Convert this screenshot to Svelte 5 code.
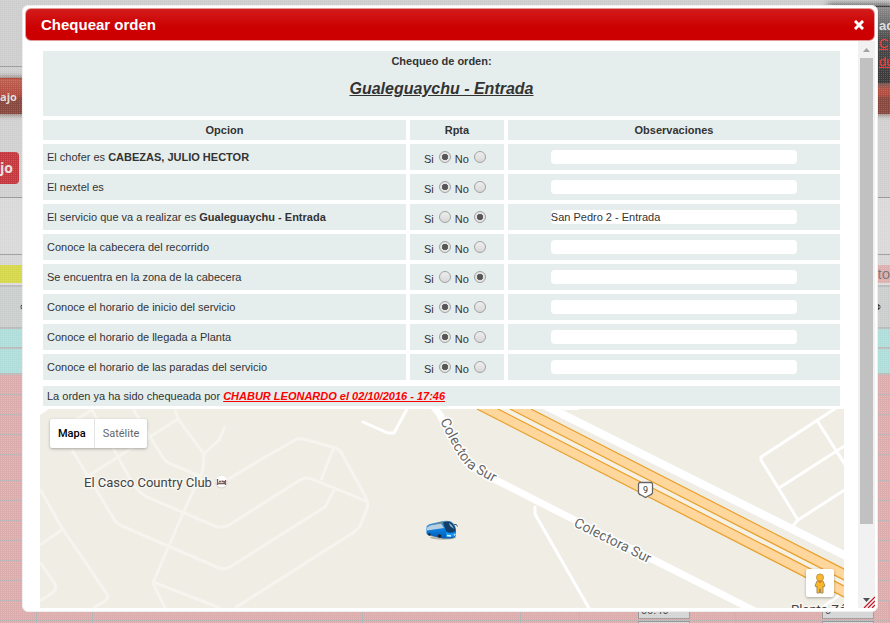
<script>
  let questions = $state([
    { text: 'El chofer es ', strong: 'CABEZAS, JULIO HECTOR', answer: 'si', note: '' },
    { text: 'El nextel es', strong: '', answer: 'si', note: '' },
    { text: 'El servicio que va a realizar es ', strong: 'Gualeguaychu - Entrada', answer: 'no', note: 'San Pedro 2 - Entrada' },
    { text: 'Conoce la cabecera del recorrido', strong: '', answer: 'si', note: '' },
    { text: 'Se encuentra en la zona de la cabecera', strong: '', answer: 'no', note: '' },
    { text: 'Conoce el horario de inicio del servicio', strong: '', answer: 'si', note: '' },
    { text: 'Conoce el horario de llegada a Planta', strong: '', answer: 'si', note: '' },
    { text: 'Conoce el horario de las paradas del servicio', strong: '', answer: 'si', note: '' }
  ]);

  // Heights of the striped order rows behind the dialog
  const orderRows = [19, 19, 19, 19, 25, 19, 19, 19, 19, 19, 19];

  const trails = [
    'M40 489L62 528L107 594Q109 598 105 601L93 608',
    'M40 545L63 529',
    'M40 562L55 584Q57 590 52 593L40 601',
    'M72 450L114 519Q117 524 122 526L219 568Q225 570 230 567L325 507L334 490',
    'M72 422L92 410L128 475Q133 489 147 497L215 526Q222 529 229 525L300 480Q306 476 314 480L366 501',
    'M88 476L178 419',
    'M133 409L162 456Q165 462 171 464L202 477',
    'M175 409L178 419L204 454L219 440L225 426',
    'M204 454L203 470L183 513L153 583L165 608',
    'M153 582L220 608',
    'M227 480L260 460L297 439Q301 438 307 440L336 448Q340 450 342 454L364 494Q370 505 366 511L360 526Q358 529 354 532L235 608',
    'M334 447L321 480'
  ];
  const lanes = [
    'M363 422L388 433H394L407 409',
    'M535 507V514L590 610',
    'M836 408L761 457V460L798 520L790 529',
    'M818 422L846 466',
    'M779 488L846 445',
    'M798 520L846 489',
    'M820 609L838 596'
  ];
</script>

<div class="page">
  <div class="backdrop">
    <div class="band top"></div>
    <div class="band nav"><span>ajo</span></div>
    <div class="band tools"><button type="button" class="work">jo</button></div>
    <div class="band filters"></div>
    <div class="band gap"></div>
    <div class="band groups"><span class="yellow"></span><span class="pink">to</span></div>
    <div class="band heads">
      {#each ['left', 'right'] as side (side)}
        <svg width="5" height="6" viewBox="0 0 5 6"><path d="M0 2.500L2.500 0L5 2.500ZM0 3.500H5L2.500 6Z" fill="#333" /></svg>
      {/each}
    </div>
    <div class="band cyan low"></div>
    <div class="band cyan"></div>
    {#each orderRows as height}
      <div class="band order" style:height="{height}px"></div>
    {/each}
    <div class="band order cells">
      <i class="a"></i><i class="b"></i><i class="c"></i><i class="d"></i><i class="e"></i>
      <i class="f"><input aria-label="Hora" value="06:40" /></i>
      <i class="g"><input aria-label="Cantidad" value="0" /></i>
    </div>
    <div class="band order cells last">
      <i class="a"></i><i class="b"></i><i class="c"></i><i class="d"></i><i class="e"></i>
      <i class="f"><input aria-label="Hora siguiente" /></i>
      <i class="g"><input aria-label="Cantidad siguiente" /></i>
    </div>
    <div class="account">
      <b>ad</b>
      <a href="#cuenta">C</a>
      <a href="#datos">du</a>
    </div>
    <div class="mesh"></div>
  </div>

  <div class="dialog" role="dialog" aria-labelledby="dialog-title">
    <header>
      <h1 id="dialog-title">Chequear orden</h1>
      <button type="button" aria-label="Cerrar">
        <svg width="10" height="10" viewBox="0 0 10 10"><path d="M2 2L8 8M8 2L2 8" stroke="#fff" stroke-width="3" stroke-linecap="square" /></svg>
      </button>
    </header>

    <div class="body">
      <div class="content">
        <table>
          <colgroup><col class="option" /><col class="reply" /><col /></colgroup>
          <thead>
            <tr class="intro">
              <th colspan="3">
                <div>Chequeo de orden:</div>
                <h2>Gualeguaychu - Entrada</h2>
              </th>
            </tr>
            <tr class="names"><th>Opcion</th><th>Rpta</th><th>Observaciones</th></tr>
          </thead>
          <tbody>
            {#each questions as q, i}
              <tr>
                <td>{q.text}{#if q.strong}<b>{q.strong}</b>{/if}</td>
                <td class="choice">
                  <div>
                    <label>Si <input type="radio" name="r{i}" value="si" bind:group={q.answer} /></label>
                    <label>No <input type="radio" name="r{i}" value="no" bind:group={q.answer} /></label>
                  </div>
                </td>
                <td class="note"><input type="text" aria-label="Observaciones: {q.text}" bind:value={q.note} /></td>
              </tr>
            {/each}
          </tbody>
        </table>

        <p class="checked">La orden ya ha sido chequeada por <strong>CHABUR LEONARDO el 02/10/2016 - 17:46</strong></p>

        <div class="map">
          <svg class="tiles" viewBox="40 409 804 199" preserveAspectRatio="xMinYMin slice">
            <defs>
              <path id="road-a" d="M440 421C450 441 461 463 470 469S486 478 505 489" />
              <path id="road-b" d="M573 526L660 569" />
              <linearGradient id="bus-side" x1="0" y1="0" x2="0" y2="1">
                <stop offset="0" stop-color="#3d9be0" /><stop offset=".5" stop-color="#0a7fe0" /><stop offset="1" stop-color="#0558ae" />
              </linearGradient>
            </defs>
            <rect x="40" y="409" width="804" height="199" fill="#efede4" />
            <g fill="none" stroke="#f6f4ef" stroke-width="3">
              {#each trails as d}<path {d} />{/each}
            </g>
            <path d="M40 409H49L40 415Z" fill="#fff" />
            <g fill="none" stroke="#fff" stroke-width="3" stroke-linecap="round">
              {#each lanes as d}<path {d} />{/each}
              <path d="M544 405L846 556" stroke-width="8" />
              <path d="M564 409L578 409" stroke-width="2" />
              <path d="M431 403L440 415C450 434 461 458 470 465S486 475 500 482L600 533L650 558L755 611" stroke-width="7" />
            </g>
            <path d="M510 409L498 409L844 586V580Z" fill="#f5f1e5" />
            <g fill="#ffd69b">
              <path d="M531 409L846 570V581L510 409Z" />
              <path d="M498 409L846 587V598L477 409Z" />
            </g>
            <path d="M531 409L846 570M510 409L846 581M498 409L846 587M477 409L846 598" stroke="#e8a02c" stroke-width="1.2" fill="none" />

            <path d="M639.5 482.500H651.500L652.500 484V493Q652 494.500 649 495.500L645.500 497.500L642 495.500Q639 494.500 638.500 493V484Z" fill="#fff" stroke="#666" stroke-width="1.3" />
            <text x="645.500" y="493" class="shield">9</text>

            <g class="road-name">
              <text><textPath href="#road-a">Colectora Sur</textPath></text>
              <text><textPath href="#road-b">Colectora Sur</textPath></text>
            </g>
            <text x="84" y="487" class="place">El Casco Country Club</text>
            <text x="791" y="614" class="place">Planta Zárate</text>

            <circle cx="221.500" cy="482" r="6.500" fill="#d8d5cf" />
            <circle cx="221.500" cy="481.500" r="6" fill="#fff" />
            <path d="M217.500 479V485M217.500 483.500H225.500M225.500 480V485M219 481.500H221M221.500 481L225 482" stroke="#7a5f5a" stroke-width="1.400" fill="none" />

            <g class="bus">
              <ellipse cx="443" cy="537.500" rx="13" ry="2.200" fill="#918d82" opacity=".6" />
              <path d="M426.500 527Q427 525 430 524L442 521.200Q450 520 453 523Q456 526 456 531V535.500Q455 538 450 538.500L443 538.500L428 535Q426.500 534.500 426.500 533Z" fill="url(#bus-side)" />
              <path d="M427 527.500L430 525.500L441 523.500L444 528L427 530.500Z" fill="#b9cfdf" />
              <path d="M429 525L443 521.500L449 521L443 523.500Z" fill="#6d8793" />
              <path d="M443 522.500Q449 520.500 452 523Q455 526 455.500 531Q450 534 446 531Z" fill="#133e68" />
              <path d="M449 523Q452 524 454 529L450 526Z" fill="#8fb3cc" />
              <path d="M446 532Q450 534.500 456 532V535Q453 538 446 537Z" fill="#1497f5" />
              <path d="M447 535.500L451 536M454 535L455.500 534.500" stroke="#d7f6ff" stroke-width="1.500" />
              <circle cx="439.500" cy="536" r="1.800" fill="#1b2733" /><circle cx="429.500" cy="534.500" r="1.300" fill="#1b2733" />
              <path d="M454 524.500Q457 523.500 457.500 526.500" stroke="#4a5560" fill="none" />
            </g>
          </svg>
          <div class="types">
            <button type="button" class="on">Mapa</button><button type="button">Satélite</button>
          </div>
          <button type="button" class="pegman" aria-label="Street View">
            <svg width="14" height="21" viewBox="0 0 14 21">
              <path d="M4 8Q7 6.500 10 8L12 13L10.500 14L10 13V20H7.500V16H6.500V20H4V13L3.500 14L2 13Z" fill="#fbb829" stroke="#a78b62" stroke-width="1" />
              <circle cx="7" cy="4.500" r="3.500" fill="#fbb829" stroke="#c09443" />
              <path d="M5 8H9L7 10.500Z" fill="#e8711a" />
            </svg>
          </button>
        </div>
      </div>

      <div class="scroll" aria-hidden="true">
        <svg width="17" height="17" viewBox="0 0 17 17"><path d="M5 11L8.500 7L12 11Z" fill="#a3a3a3" /></svg>
        <div class="thumb"></div>
        <svg class="end" width="17" height="17" viewBox="0 0 17 17">
          <path d="M5 7L8.500 11L12 7Z" fill="#505050" />
          <path d="M6 17L17 6M10 17L17 10M14 17L17 14" stroke="#cc1122" stroke-width="1.200" />
        </svg>
      </div>
    </div>
  </div>
</div>

<style>
  .page {
    display: grid;
    min-height: 100vh;
    overflow: hidden;
    color: #333;
    font: 11px/13px "Liberation Sans", Arial, sans-serif;
  }
  button, input { font: inherit; }
  .backdrop, .dialog { grid-area: 1 / 1; }
  .backdrop { position: relative; overflow: hidden; background: #dcdcdc; }
  .band { box-sizing: border-box; display: flex; justify-content: space-between; }
  .top { height: 78px; background: linear-gradient(#999, #999) 0 66px / 100% 1px no-repeat, #cecece; }
  .nav {
    position: relative;
    height: 36px;
    align-items: center;
    background: linear-gradient(#bd6153, #b04c40 45%, #86483f 55%, #86483f);
    box-shadow: 0 0 4px 2px #9a8a86;
    border-top: 1px solid #a6402f;
    color: #e4dada;
    font: bold 11px/16px "Open Sans", sans-serif;
  }
  .tools { height: 84px; padding-top: 38px; align-items: flex-start; border-bottom: 1px solid #999; background: #d0d0d0; }
  .work {
    width: 19px;
    height: 32px;
    padding: 0;
    border: 0;
    border-radius: 0 4px 4px 0;
    background: #c23a40;
    color: #e8e0e0;
    text-align: left;
    font: bold 14px/20px "Open Sans", sans-serif;
  }
  .filters { height: 57px; border-bottom: 1px solid #999; background: #d9d9d9; }
  .gap { height: 10px; background: #d6d6d6; }
  .groups { height: 22px; border-bottom: 2px solid #bbb; }
  .groups span { width: 50%; height: 18px; }
  .yellow { background: #d5d84f; }
  .pink { background: #deafaf; text-align: right; color: #777; font-size: 15px; line-height: 18px; }
  .heads { height: 42px; align-items: center; padding: 0 9px 0 20px; border-bottom: 2px solid #bbb; background: #cacfce; }
  .cyan { height: 26px; border-bottom: 2px solid #bbb; background: #b0dcda; }
  .cyan.low { height: 20px; }
  .order { box-sizing: content-box; border-bottom: 1px solid #aeb6ba; background: #dbadad; }
  .cells { height: 19px; justify-content: flex-start; }
  .cells.last { height: 2px; border: 0; }
  .cells i { box-sizing: border-box; flex: none; border-right: 1px solid #aeb6ba; font-style: normal; }
  .cells .a { width: 37px; }
  .cells .b { width: 56px; }
  .cells .c { width: 270px; }
  .cells .d { width: 158px; }
  .cells .e { width: 59px; }
  .cells .f { width: 156px; padding-left: 58px; }
  .cells .g { flex: 1; padding-left: 86px; }
  .cells input {
    display: block;
    box-sizing: border-box;
    width: 52px;
    height: 18px;
    padding: 0 2px;
    border: 1px solid #999;
    background: #d5d5d5;
    color: #444;
  }
  .account {
    position: absolute;
    top: 6px;
    right: 0;
    display: flex;
    flex-direction: column;
    align-items: flex-start;
    gap: 4px;
    box-sizing: border-box;
    width: 60px;
    height: 77px;
    padding: 12px 0 0 49px;
    border-top: 1px solid #333;
    background: linear-gradient(#8c8c8c, #484848 45%, #3a3a3a);
    box-shadow: 0 0 6px 2px #555;
    color: #ddd;
    font-size: 13px;
    line-height: 14px;
  }
  .account a { color: #e8403e; }
  .mesh { position: absolute; inset: 0; background: conic-gradient(rgba(255, 255, 255, .16) 25%, transparent 0) 0 0 / 2px 2px; }

  .dialog {
    position: relative;
    align-self: start;
    margin: 5px 12px 0 22px;
    padding: 2px 2px 3px;
    border: 1px solid #eee;
    border-radius: 6px;
    background: #fff;
  }
  header {
    display: flex;
    align-items: center;
    justify-content: space-between;
    box-sizing: border-box;
    height: 33px;
    padding: 0 10px 0 15px;
    border: 1px solid #e39a9a;
    border-radius: 6px;
    background: linear-gradient(#d21c1c, #c00 60%);
    color: #fff;
  }
  h1 { margin: 0; font-size: 15px; line-height: 20px; }
  header button { display: flex; padding: 0; border: 0; background: none; }
  .body { display: flex; }
  .content { flex: 1; min-width: 0; padding: 6px 14px 0; }
  table { width: 100%; table-layout: fixed; border-spacing: 4px; }
  .option { width: 46%; }
  .reply { width: 94px; }
  th, td { padding: 0 4px; background: #e6eeed; }
  td { height: 26px; }
  .names th { height: 20px; }
  .intro th { height: 61px; padding-top: 4px; vertical-align: top; }
  h2 { margin: 11px 0 0; font-size: 16px; line-height: 20px; font-style: italic; text-decoration: underline; }
  .choice { padding: 0; vertical-align: top; }
  .choice div { display: flex; justify-content: center; gap: 4px; height: 19px; padding: 7px 4px 0 0; }
  label { display: flex; align-items: baseline; gap: 5px; }
  [type="radio"] {
    appearance: none;
    box-sizing: border-box;
    width: 12px;
    height: 12px;
    margin: 0 0 2px;
    border: 1px solid #a2a2a2;
    border-radius: 50%;
    background: linear-gradient(#eee, #d8d8d8);
  }
  [type="radio"]:checked { background: radial-gradient(circle, #555 0 2px, #666 3px, #e4e4e4 3px); }
  .note { text-align: center; }
  .note input {
    display: block;
    box-sizing: border-box;
    width: 76%;
    height: 14px;
    margin: 0 auto;
    padding: 0;
    border: 0;
    border-radius: 4px;
    background: #fff;
    color: #333;
  }
  .checked { margin: 2px 4px 3px; padding: 4px 4px 3px; background: #e6eeed; }
  .checked strong { color: #f00; font-style: italic; text-decoration: underline; }

  .map { position: relative; height: 199px; margin-left: 1px; overflow: hidden; background: #efede4; font-family: Roboto, sans-serif; }
  .tiles { display: block; width: 100%; height: 100%; }
  .place { fill: #444; font-size: 13px; paint-order: stroke; stroke: #f7f6f1; stroke-width: 3px; }
  .road-name { fill: #666; font-size: 14px; paint-order: stroke; stroke: #fff; stroke-width: 3px; }
  .shield { fill: #333; font-size: 9px; text-anchor: middle; }
  .types {
    position: absolute;
    top: 10px;
    left: 10px;
    display: flex;
    border-radius: 2px;
    background: #fff;
    box-shadow: 0 1px 3px rgba(0, 0, 0, .3);
  }
  .types button { padding: 8px; border: 0; background: none; color: #666; line-height: 13px; }
  .types .on { border-right: 1px solid #e4e4e4; color: #000; font-weight: 500; }
  .pegman {
    position: absolute;
    right: 10px;
    bottom: 11px;
    display: flex;
    align-items: center;
    justify-content: center;
    width: 28px;
    height: 28px;
    padding: 0;
    border: 0;
    border-radius: 2px;
    background: #fff;
    box-shadow: 0 1px 3px rgba(0, 0, 0, .3);
  }
  .scroll { display: flex; flex-direction: column; width: 17px; background: #f1f1f1; }
  .thumb { width: 13px; height: 466px; margin: 0 2px; background: #c1c1c1; }
  .scroll .end { margin-top: auto; }
</style>
